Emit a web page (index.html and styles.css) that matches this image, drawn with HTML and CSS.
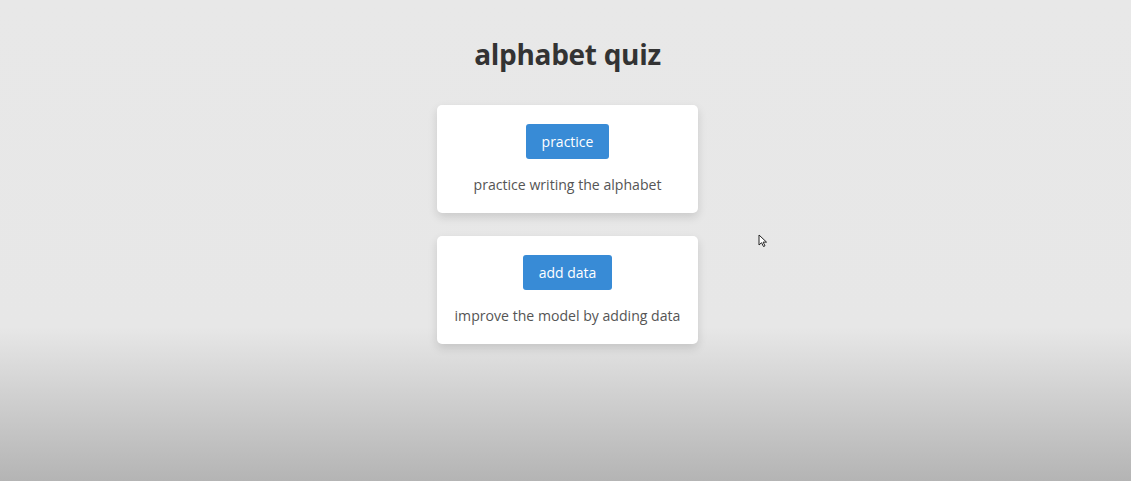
FILE: index.html
```html
<!DOCTYPE html>
<html>
<head>
<meta charset="utf-8">
<link rel="stylesheet" href="styles.css">
</head>
<body>
<main class="page">
  <h1 class="title">alphabet quiz</h1>
  <section class="cards">
    <div class="card">
      <button class="btn btn-practice">practice</button>
      <p class="desc">practice writing the alphabet</p>
    </div>
    <div class="card">
      <button class="btn btn-data">add data</button>
      <p class="desc">improve the model by adding data</p>
    </div>
  </section>
</main>
<svg class="cursor" width="11" height="14" viewBox="0 0 11 14"><path d="M1 1 L1 11 L3.5 8.7 L5.5 12.5 L7 11.8 L5.1 8.1 L8.5 8.1 Z" fill="#fff" stroke="#222" stroke-width="1"/></svg>
</body>
</html>
```
FILE: styles.css
```css
html, body {
  margin: 0;
  height: 100%;
}
body {
  background: linear-gradient(to bottom, #e8e8e8 0%, #e7e7e7 68%, #b4b4b4 100%);
  font-family: "Open Sans", "Noto Sans", sans-serif;
  overflow: hidden;
  position: relative;
}
.page {
  display: flex;
  flex-direction: column;
  align-items: center;
  padding-top: 34px;
  padding-left: 4px;
}
.title {
  margin: 0;
  font-size: 28px;
  font-weight: 700;
  color: #333;
  letter-spacing: -0.3px;
  line-height: 40px;
}
.cards {
  display: flex;
  flex-direction: column;
  gap: 23px;
  margin-top: 31px;
}
.card {
  width: 261px;
  height: 108px;
  box-sizing: border-box;
  background: #fff;
  border-radius: 5px;
  box-shadow: 0 4px 10px rgba(0,0,0,0.13);
  display: flex;
  flex-direction: column;
  align-items: center;
  padding-top: 19px;
}
.btn {
  border: none;
  background: #388bd6;
  color: #fff;
  font-family: inherit;
  font-size: 14px;
  height: 35px;
  border-radius: 3px;
  padding: 0;
}
.btn-practice { width: 83px; }
.btn-data { width: 89px; }
.desc {
  margin: 16px 0 0;
  font-size: 14.1px;
  color: #555;
  letter-spacing: 0;
  line-height: 20px;
}
.cursor {
  position: absolute;
  left: 758px;
  top: 234px;
}
```
